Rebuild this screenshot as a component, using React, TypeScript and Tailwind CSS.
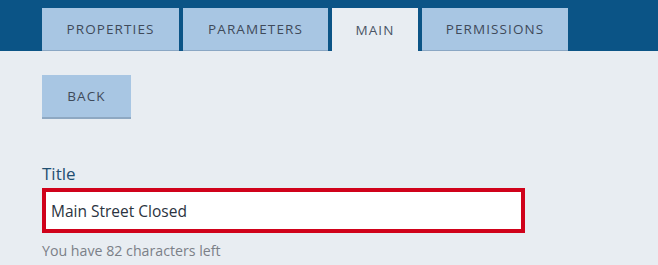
import { useState } from 'react';

const tabs = [
  { label: 'PROPERTIES', w: 'w-[137px]' },
  { label: 'PARAMETERS', w: 'w-[145px]' },
  { label: 'MAIN', w: 'w-[86px]' },
  { label: 'PERMISSIONS', w: 'w-[146px]' },
];

export default function App() {
  const [active, setActive] = useState('MAIN');
  const [title, setTitle] = useState('Main Street Closed');

  return (
    <div className="w-[658px] h-[265px] flex flex-col bg-[#e8edf2] overflow-hidden" style={{ fontFamily: '"Open Sans", Lato, sans-serif' }}>
      {/* Tab bar */}
      <div className="h-[51px] bg-[#0b5486] flex items-end gap-1 px-[42px] shrink-0">
        {tabs.map((t) => (
          <button
            key={t.label}
            onClick={() => setActive(t.label)}
            className={`${t.w} h-[43px] flex items-center justify-center pt-[1px] text-[13.5px] tracking-[1.1px] ${
              active === t.label
                ? 'bg-[#e8edf2] text-[#4a5566]'
                : 'bg-[#a8c6e3] text-[#3f4a5a] border-b border-[#8aa7c4]'
            }`}
          >
            {t.label}
          </button>
        ))}
      </div>

      {/* Content */}
      <div className="px-[42px] pt-6">
        <button className="w-[89px] h-[44px] bg-[#a8c6e3] border-b-2 border-[#8ea8c2] text-[13.5px] tracking-[1.1px] text-[#3f4a5a]">
          BACK
        </button>

        <div className="mt-[44px] flex flex-col">
          <label className="text-[17px] leading-[22px] text-[#1f4f72]">Title</label>
          <input
            value={title}
            onChange={(e) => setTitle(e.target.value)}
            className="mt-[3px] w-[483px] h-[45px] bg-white border-4 border-[#d0021b] px-[5px] text-[15.5px] text-[#2b3340] outline-none"
          />
          <span className="mt-[7px] text-[14.2px] text-[#7b8088]">
            You have {100 - title.length} characters left
          </span>
        </div>
      </div>
    </div>
  );
}
